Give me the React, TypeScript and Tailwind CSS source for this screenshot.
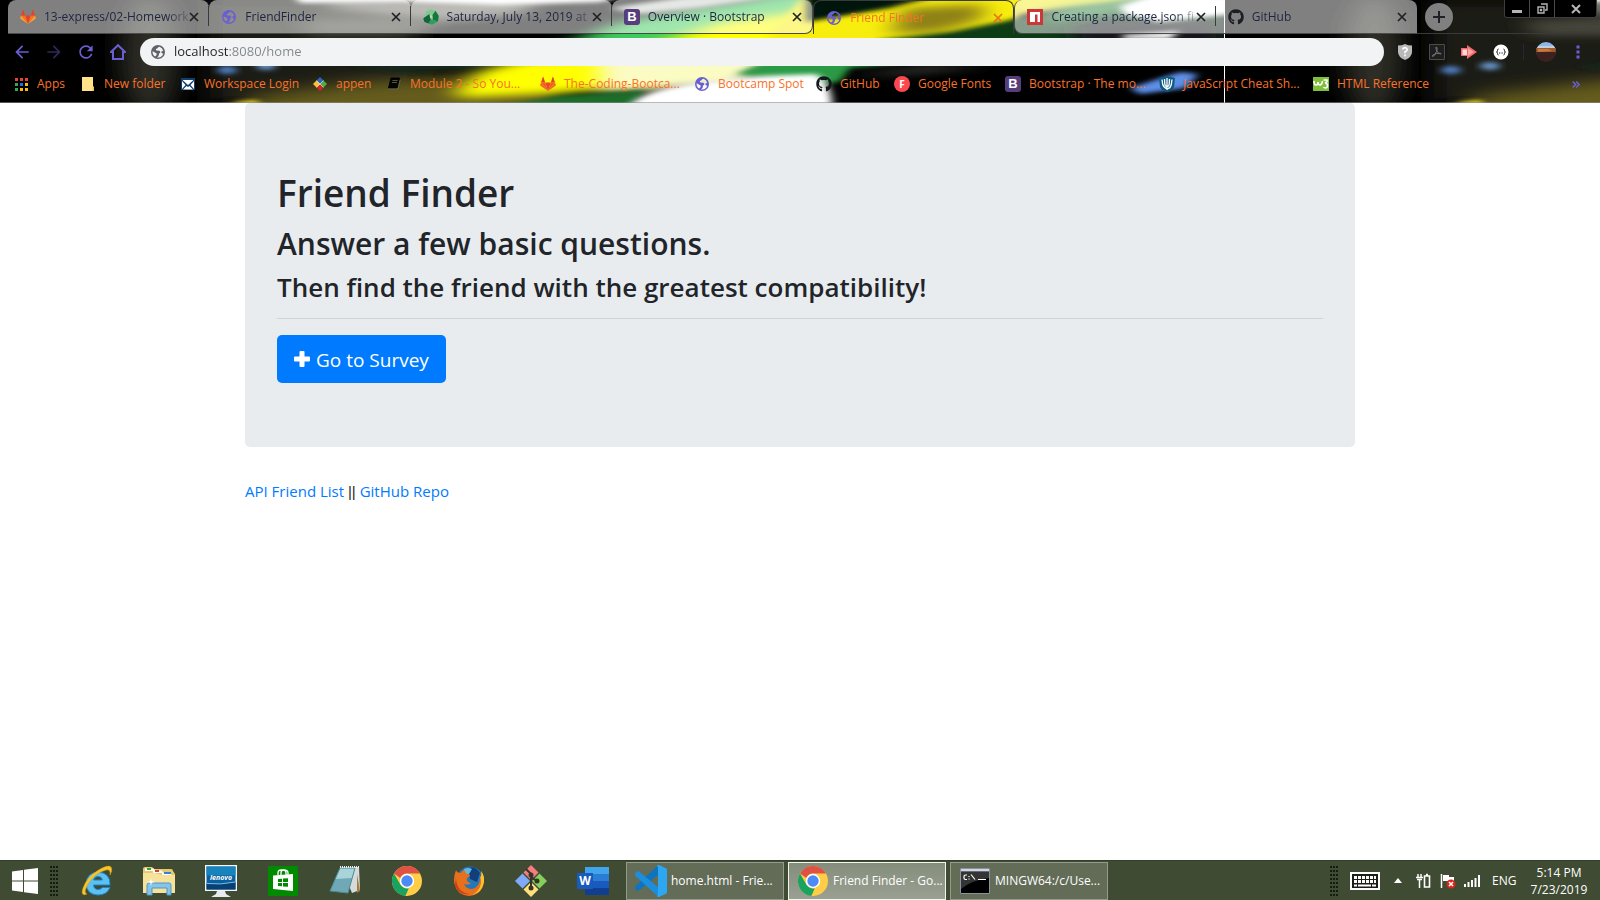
import type { ReactNode } from "react";
import { FaGithub } from "react-icons/fa";
import { MdArrowBack, MdArrowForward, MdRefresh } from "react-icons/md";

/* ---------- Theme artwork ---------- */

function ThemeArtwork() {
  return (
    <svg className="absolute inset-0 h-full w-full" preserveAspectRatio="xMinYMin slice" aria-hidden="true">
      <defs>
        <filter id="soft" x="-30%" y="-100%" width="160%" height="300%">
          <feGaussianBlur stdDeviation="14 8" />
        </filter>
        <filter id="mid" x="-30%" y="-100%" width="160%" height="300%">
          <feGaussianBlur stdDeviation="12 4" />
        </filter>
        <filter id="crisp" x="-30%" y="-100%" width="160%" height="300%">
          <feGaussianBlur stdDeviation="4 2" />
        </filter>
        <clipPath id="tileClip">
          <rect width="1224" height="103" />
        </clipPath>
        <clipPath id="upperClip">
          <rect width="1224" height="52" />
        </clipPath>
        <clipPath id="lowerClip">
          <rect y="52" width="1224" height="51" />
        </clipPath>
        <g id="tile" clipPath="url(#tileClip)">
          <rect width="1224" height="103" fill="#000" />
          <ellipse cx="150" cy="55" rx="28" ry="60" fill="#2e2f27" filter="url(#soft)" />
          <path d="M210 0H420V103H210Z" fill="#1a1a13" filter="url(#soft)" />
          <g clipPath="url(#upperClip)">
            <path d="M330 8L430 22L520 14L540 0H330Z" fill="#77766c" filter="url(#mid)" />
            <path d="M290 -8H640L600 2L500 5L400 2L300 3Z" fill="#fff" filter="url(#crisp)" />
            <path d="M300 20L400 16L440 24L400 36L310 36Z" fill="#45443a" filter="url(#mid)" />
            <path d="M560 46L620 22L700 8L800 -8H900V50Z" fill="#3ecb5c" filter="url(#mid)" />
            <path d="M610 8L690 -4H780L700 8L640 14Z" fill="#c9cfc9" filter="url(#crisp)" />
            <path d="M650 46L720 22L830 8L900 0V60H660Z" fill="#ff0" filter="url(#mid)" />
            <path d="M800 0L850 -6H1030L1012 30L860 48H760Z" fill="#f8ee08" filter="url(#crisp)" />
            <path d="M806 -6H945L890 8L830 18L806 22Z" fill="#03120a" filter="url(#crisp)" />
            <path d="M905 8L985 4L980 20L940 32L890 34Z" fill="#8f8212" filter="url(#mid)" />
            <path d="M880 40L950 32L1020 18L1100 12L1224 4V56H860Z" fill="#0a3a16" filter="url(#crisp)" />
            <path d="M1015 -8H1190L1110 4L1015 14Z" fill="#f5ed2c" filter="url(#crisp)" />
            <path d="M1050 10L1150 -4L1190 0L1120 12L1050 22Z" fill="#3aa050" filter="url(#mid)" />
            <path d="M1070 26L1110 20H1224V52H1080Z" fill="#17151a" filter="url(#mid)" />
            <path d="M1120 6L1150 -4H1232V14L1160 22L1124 14Z" fill="#fff" filter="url(#crisp)" />
            <path d="M1122 35L1180 31L1170 39H1124Z" fill="#fff" filter="url(#crisp)" />
          </g>
          <g clipPath="url(#lowerClip)">
            <path d="M250 96L360 82L560 66V125H240Z" fill="#655b1a" filter="url(#soft)" />
            <path d="M350 66L480 58L540 58L490 69L400 73Z" fill="#14281c" filter="url(#crisp)" />
            <path d="M455 92L480 72L520 60L660 52V84L580 92L460 98Z" fill="#ff0" filter="url(#mid)" />
            <path d="M600 52H790L740 86L600 92Z" fill="#fbfbc4" filter="url(#mid)" />
            <path d="M490 108L560 96L645 90L630 114H490Z" fill="#1f6d2c" filter="url(#crisp)" />
            <path d="M736 74L770 60L900 52L900 80L800 84Z" fill="#2b9a45" filter="url(#crisp)" />
            <path d="M838 84L850 68L960 58H1236V116H838Z" fill="#040404" filter="url(#crisp)" />
            <path d="M626 110Q634 92 690 84L760 76L816 74Q834 84 832 112Z" fill="#fff" filter="url(#crisp)" />
            <path d="M850 76L930 66L990 66L900 74Z" fill="#4a4944" filter="url(#mid)" />
            <path d="M1130 88L1180 72L1198 74L1186 88L1140 94Z" fill="#5d8fe8" filter="url(#crisp)" />
            <ellipse cx="227" cy="70" rx="10" ry="4" fill="#4d7dbd" filter="url(#crisp)" />
            <ellipse cx="266" cy="66" rx="10" ry="4" fill="#6593c4" filter="url(#crisp)" />
            <path d="M228 106L238 102L256 100L262 106Z" fill="#ffe62e" filter="url(#crisp)" />
          </g>
        </g>
      </defs>
      <use href="#tile" />
      <use href="#tile" x="1224" />
      <rect x="1224" width="1" height="103" fill="#fff" />
    </svg>
  );
}

/* ---------- Favicons ---------- */

const GitlabIcon = ({ flat = false }: { flat?: boolean }) => (
  <svg viewBox="0 0 16 16" className="size-4">
    <path fill={flat ? "#e8492c" : "#e24329"} d="M8 15 5.200 6.400h5.600z" />
    <path fill={flat ? "#f25a2a" : "#fc6d26"} d="M8 15 5.200 6.400H1zM8 15l2.800-8.600H15z" />
    <path fill={flat ? "#f4642a" : "#fca326"} d="M1 6.400.2 9q-.1.500.3.800L8 15zM15 6.400l.8 2.600q.1.500-.3.800L8 15z" />
    <path fill="#e24329" d="M1 6.400h4.200L3.400 1q-.3-.5-.6 0zM15 6.400h-4.200L12.600 1q.3-.5.6 0z" />
  </svg>
);

const GlobeMark = ({ className }: { className: string }) => (
  <svg viewBox="0 0 14 14" className={className}>
    <path
      fill="currentColor"
      fillRule="evenodd"
      d="M7 0a7 7 0 1 1 0 14A7 7 0 0 1 7 0zM8.500 1.800Q7 2 6.500 3.200L5 4q-.6 1 .6 1.500l2.900.3q1 .5.800 1.700L8 8.800 7.600 11 6 12.400a5.500 5.500 0 0 0 6.200-3.600L10.500 8V6.500l1.700-.8A5.500 5.500 0 0 0 8.500 1.800zM1.600 6.200A5.500 5.500 0 0 0 4 11.400L5.600 10V8.500L4 7.500z"
    />
  </svg>
);

const GlobeIcon = () => <GlobeMark className="size-3.5 text-[#6a5fd0]" />;

const BootstrapIcon = () => (
  <span className="flex size-4 items-center justify-center rounded-[3px] bg-[#563d7c] font-['Liberation_Sans',sans-serif] text-[13px] leading-4 font-bold text-white">
    B
  </span>
);

const CircleLeafIcon = () => (
  <svg viewBox="0 0 16 16" className="size-4">
    <path fill="#7fc98f" d="M3 2 8 .2l4.500 1.500L10 6 6.500 5 2 8z" />
    <path fill="#0f7a3c" d="M12.500 1.700 15.800 7l-.8 5.500L10 11l-.5-5z" />
    <path fill="#2f9f55" d="M15 12.500 9 15.800 5.500 14.500l2-4 3.500.5z" />
    <path fill="#0d6a38" d="M2 8 .2 9.500 1.500 13l4 1.500L8 10 6.500 5z" />
    <path fill="#b4dfbd" d="M6.500 5.500 9.500 7.500 7.500 10z" />
  </svg>
);

const NpmIcon = () => (
  <svg viewBox="0 0 16 16" className="size-4">
    <path fill="#cb3837" d="M0 0h16v16H0z" />
    <path fill="#fff" d="M3 3h10v10h-2.500V5.500H8V13H3z" />
  </svg>
);

const AppsIcon = () => (
  <svg viewBox="0 0 13 13" className="size-[13px]">
    <path fill="#ea4335" d="M0 0h3v3H0zM5 0h3v3H5zM10 0h3v3h-3z" />
    <path fill="#34a853" d="M0 5h3v3H0zM0 10h3v3H0z" />
    <path fill="#1a73e8" d="M5 5h3v3H5z" />
    <path fill="#fbbc05" d="M10 5h3v3h-3zM5 10h3v3H5zM10 10h3v3h-3z" />
  </svg>
);

const FolderIcon = () => (
  <svg viewBox="0 0 14 14" className="size-3.5">
    <path fill="#ffe38a" d="M1 0h11v9l1 1v4H1z" />
    <path fill="#f0c45a" d="M11.500 10H13v4h-1.500z" />
  </svg>
);

const MailIcon = () => (
  <svg viewBox="0 0 14 14" className="size-3.5">
    <path fill="#0f3f6a" d="M0 1h14v12H0z" />
    <path fill="#fff" d="m1.500 3 5.500 5 5.500-5zM1 4l3.500 4L1 12zM13 4 9.500 8l3.500 4zM2 12.500 5.500 9 7 10l1.500-1 3.500 3.500z" />
  </svg>
);

const AppenIcon = () => (
  <svg viewBox="0 0 14 14" className="size-3.5">
    <path fill="#2e63c4" d="m7 0 3.500 3.500L7 7 3.500 3.500z" />
    <path fill="#4caf3c" d="M10.500 3.500 14 7l-3.500 3.500L7 7z" />
    <path fill="#d2232a" d="M7 7l3.500 3.500L7 14l-3.500-3.500z" />
    <path fill="#f5c52c" d="M3.500 3.500 7 7l-3.500 3.500L0 7z" />
    <path stroke="#fff" strokeWidth=".6" d="m3.500 3.500 7 7m0-7-7 7" />
  </svg>
);

const BookIcon = () => (
  <svg viewBox="0 0 14 14" className="size-3.5">
    <path fill="#050505" stroke="#000" strokeLinejoin="round" d="M4 1h8.500L10 11H1.500z" />
    <path fill="none" stroke="#6b6a50" strokeWidth=".8" d="M5.500 3.500h5M5 5.500h5M1.500 12H11l2.200-9" />
  </svg>
);

const LetterFIcon = () => (
  <span className="flex size-4 items-center justify-center rounded-full bg-[#f9494f] text-[10px] leading-4 font-bold text-white">
    F
  </span>
);

const PitchforkIcon = () => (
  <svg viewBox="0 0 16 16" className="size-4">
    <path fill="#0d5a82" d="M0 2 8 0l8 2-1 9q-2 4-7 5-5-1-7-5z" />
    <path fill="none" stroke="#fff" strokeWidth="1.300" d="M8 2v12M3 3.500l.7 5Q5 12 8 12.500t4.300-4l.7-5M5.500 3l.3 5Q6 10.500 8 10.500M10.500 3l-.3 5Q10 10.500 8 10.500" />
  </svg>
);

const W3Icon = () => (
  <svg viewBox="0 0 16 14" className="h-3.5 w-4">
    <path fill="#7fbf3b" d="M0 0h16v14H0z" />
    <path
      fill="none"
      stroke="#fff"
      strokeWidth="1.600"
      d="M1 4q0 4 2 4t2-3q0 3 2 3t2.500-4M10.500 3H14q.5 2.500-2 3 2.500.2 2.500 2.500T12.500 11Q11 11 10.500 10"
    />
  </svg>
);

const CloseGlyph = () => (
  <svg viewBox="0 0 10 10" className="size-2.5">
    <path d="m1 1 8 8M9 1 1 9" stroke="currentColor" strokeWidth="1.700" />
  </svg>
);

/* ---------- Tab strip ---------- */

type Tab = { title: string; icon: ReactNode; shape: string; divider?: boolean; active?: boolean };

const lightTab = "bg-white/50 border-b border-[#4a4a4a] text-[#1d2540]";

const tabs: Tab[] = [
  { title: "13-express/02-Homework", icon: <GitlabIcon />, shape: lightTab, divider: true },
  { title: "FriendFinder", icon: <GlobeIcon />, shape: lightTab, divider: true },
  { title: "Saturday, July 13, 2019 at", icon: <CircleLeafIcon />, shape: lightTab, divider: true },
  { title: "Overview · Bootstrap", icon: <BootstrapIcon />, shape: `${lightTab} rounded-br-lg border-r` },
  { title: "Friend Finder", icon: <GlobeIcon />, shape: "border border-b-0 border-[#3a3a3a] text-[#f9722a]", active: true },
  { title: "Creating a package.json fi", icon: <NpmIcon />, shape: `${lightTab} rounded-bl-lg border-l`, divider: true },
  { title: "GitHub", icon: <FaGithub className="size-4 text-[#1b1f23]" />, shape: lightTab },
];

function TabStrip() {
  return (
    <div className="flex h-[34px] items-start pl-2">
      <div role="tablist" aria-label="Open tabs" className="grid max-w-[1409px] min-w-0 shrink basis-full grid-cols-7">
        {tabs.map((tab) => (
          <div
            key={tab.title}
            role="tab"
            aria-selected={!!tab.active}
            className={`relative flex h-[34px] min-w-0 items-center rounded-t-lg pr-[9px] pl-3 text-[12px] ${tab.shape}`}
          >
            <span className="mr-2 flex size-4 shrink-0 items-center justify-center">{tab.icon}</span>
            <span className="min-w-0 flex-1 whitespace-nowrap [mask-image:linear-gradient(to_right,#000_85%,#0004)]">
              {tab.title}
            </span>
            <button
              aria-label={`Close ${tab.title}`}
              className={`flex size-3 shrink-0 items-center justify-center ${tab.active ? "text-[#e8701e]" : "text-[#202124]"}`}
            >
              <CloseGlyph />
            </button>
            {tab.divider && <span className="absolute top-1.5 right-0 h-5 w-px bg-[#3a3a3a]" />}
          </div>
        ))}
      </div>
      <div className="flex h-[34px] shrink-0 grow basis-[150px] border-b border-[#3a3a3a]">
        <button aria-label="New tab" className="mt-[3px] ml-2 flex size-7 shrink-0 items-center justify-center rounded-full bg-[#808080]">
          <svg viewBox="0 0 12 12" className="size-3">
            <path d="M6 0v12M0 6h12" stroke="#202124" strokeWidth="2" />
          </svg>
        </button>
        <div className="mr-[3px] ml-auto flex h-[18px] w-[93px] rounded-b-[3px] border border-t-0 border-[#3d3d3d] bg-black">
          <button aria-label="Minimize" className="flex w-[25px] items-center justify-center border-r border-[#4a4a4a]">
            <svg viewBox="0 0 10 10" className="size-2.5">
              <path d="M0 6h10v3H0z" fill="#b5b5b5" />
            </svg>
          </button>
          <button aria-label="Restore" className="flex w-[25px] items-center justify-center border-r border-[#4a4a4a]">
            <svg viewBox="0 0 11 11" className="size-[11px]">
              <path d="M4 1h6v6H8M1 4h6v6H1zM3.500 6.500h1v1h-1z" fill="none" stroke="#b5b5b5" strokeWidth="1.400" />
            </svg>
          </button>
          <button aria-label="Close window" className="flex flex-1 items-center justify-center">
            <svg viewBox="0 0 10 10" className="size-2.5">
              <path d="m1 1 8 8M9 1 1 9" stroke="#b5b5b5" strokeWidth="2" />
            </svg>
          </button>
        </div>
      </div>
    </div>
  );
}

/* ---------- Toolbar ---------- */

function Toolbar() {
  return (
    <div className="flex h-9 items-center pl-3">
      <div className="flex gap-3 text-[#6a5fd0]">
        <button aria-label="Back" className="flex size-5 items-center justify-center">
          <MdArrowBack className="size-5" />
        </button>
        <button aria-label="Forward" className="flex size-5 items-center justify-center text-[#2f2a5a]">
          <MdArrowForward className="size-5" />
        </button>
        <button aria-label="Reload" className="flex size-5 items-center justify-center">
          <MdRefresh className="size-5" />
        </button>
        <button aria-label="Home" className="flex size-5 items-center justify-center">
          <svg viewBox="0 0 16 16" className="size-4">
            <path d="M1 8 8 1.200 15 8h-2v7H3V8z" fill="none" stroke="currentColor" strokeWidth="2" />
          </svg>
        </button>
      </div>
      <div className="ml-3 flex h-7 min-w-0 flex-1 items-center rounded-full bg-[#f1f3f4] pl-[11px]">
        <GlobeMark className="size-3.5 shrink-0 text-[#5f6368]" />
        <input
          aria-label="Address"
          defaultValue="localhost:8080/home"
          className="ml-[9px] min-w-0 flex-1 bg-[linear-gradient(to_right,#202124_55px,#80868b_55px)] bg-clip-text text-[13px] text-transparent outline-none"
        />
      </div>
      <div className="flex shrink-0 items-center">
        <button aria-label="Site protection" className="ml-[13px] flex w-4 justify-center">
          <svg viewBox="0 0 14 16" className="h-4 w-3.5">
            <path d="M0 1.500Q4 1.500 7 0q3 1.500 7 1.500V8q0 5-7 8-7-3-7-8z" fill="#b9b9b9" />
            <path d="M4.800 5.500Q5 3.600 7 3.600t2.200 1.800Q9.200 6.800 7 7.800v1.400M7 10.500v1.800" fill="none" stroke="#fff" strokeWidth="1.600" />
          </svg>
        </button>
        <button aria-label="PDF tools" className="ml-4">
          <svg viewBox="0 0 16 16" className="size-4">
            <path d="M.5.500h15v15H.5z" fill="#1e1e1e" stroke="#4b4b4b" />
            <path d="M7 3q2 0 .5 4.500Q6 11.500 4 12.500q-1.500 0 0-1.500 3-2 7.500-1.800 1.500 1-.5.800Q8 8.800 7 5z" fill="none" stroke="#777" />
          </svg>
        </button>
        <button aria-label="Shortcut" className="ml-4">
          <svg viewBox="0 0 16 14" className="h-3.5 w-4">
            <path d="M0 3h6V0l10 7-10 7v-3H0z" fill="#f4686a" />
            <path d="M1.500 4.500H6V10H1.500z" fill="#fbdcdc" />
            <path d="m7 3 6 4-6 4z" fill="#f9a3a3" />
          </svg>
        </button>
        <button aria-label="JSON viewer" className="ml-4">
          <svg viewBox="0 0 16 16" className="size-4">
            <circle cx="8" cy="8" r="7.500" fill="#fff" />
            <path d="M5.500 5Q4.500 5 4.500 6.500T3.500 8q1 0 1 1.500t1 1.500M10.500 5q1 0 1 1.500t1 1.500q-1 0-1 1.500t-1 1.500M6 9h1m.7 0h.8m.7 0h.8" fill="none" stroke="#222" />
          </svg>
        </button>
        <span className="ml-[14px] h-4 w-px bg-[#28253f]" />
        <button aria-label="Profile" className="ml-3">
          <svg viewBox="0 0 20 20" className="size-5">
            <clipPath id="avatar">
              <circle cx="10" cy="10" r="10" />
            </clipPath>
            <g clipPath="url(#avatar)">
              <path d="M0 0h20v8H0z" fill="#8db8ea" />
              <path d="M0 4h20v3H0z" fill="#c5cfdb" />
              <path d="M0 6h20v6H0z" fill="#a05a2b" />
              <path d="M0 10h20v10H0z" fill="#3c211e" />
              <path d="M2 7h10l4 2-14 1z" fill="#c57a3f" />
            </g>
          </svg>
        </button>
        <button aria-label="Menu" className="mr-[14px] ml-3.5 flex w-4 justify-center">
          <svg viewBox="0 0 4 14" className="h-3.5 w-1">
            <path d="M.5.500h3v3h-3zM.5 5.500h3v3h-3zM.5 10.500h3v3h-3z" fill="#6a5fd0" />
          </svg>
        </button>
      </div>
    </div>
  );
}

/* ---------- Bookmarks ---------- */

const bookmarks: { label: string; icon: ReactNode; width: string }[] = [
  { label: "Apps", icon: <AppsIcon />, width: "w-[67px]" },
  { label: "New folder", icon: <FolderIcon />, width: "w-[100px]" },
  { label: "Workspace Login", icon: <MailIcon />, width: "w-[132px]" },
  { label: "appen", icon: <AppenIcon />, width: "w-[74px]" },
  { label: "Module 2 - So You...", icon: <BookIcon />, width: "w-[154px]" },
  { label: "The-Coding-Bootca...", icon: <GitlabIcon flat />, width: "w-[154px]" },
  { label: "Bootcamp Spot", icon: <GlobeIcon />, width: "w-[122px]" },
  { label: "GitHub", icon: <FaGithub className="size-4 text-[#16191c]" />, width: "w-[78px]" },
  { label: "Google Fonts", icon: <LetterFIcon />, width: "w-[111px]" },
  { label: "Bootstrap · The mo...", icon: <BootstrapIcon />, width: "w-[154px]" },
  { label: "JavaScript Cheat Sh...", icon: <PitchforkIcon />, width: "w-[154px]" },
  { label: "HTML Reference", icon: <W3Icon />, width: "w-[130px]" },
];

function BookmarksBar() {
  return (
    <nav aria-label="Bookmarks" className="flex h-[33px] items-center border-b border-[#8a8a8a]/60 pr-5 pb-1 pl-[13px]">
      {bookmarks.map((item) => (
        <a key={item.label} href="#" className={`flex h-6 shrink-0 items-center gap-2 text-[12px] whitespace-nowrap text-[#f9722a] ${item.width}`}>
          <span className="flex size-4 shrink-0 items-center justify-center">{item.icon}</span>
          {item.label}
        </a>
      ))}
      <button aria-label="More bookmarks" className="ml-auto">
        <svg viewBox="0 0 8 7" className="h-[7px] w-2">
          <path d="m.7.500 3 3-3 3M4.200.500l3 3-3 3" fill="none" stroke="#6a5fd0" strokeWidth="1.500" />
        </svg>
      </button>
    </nav>
  );
}

/* ---------- Page ---------- */

function Page() {
  return (
    <main className="mx-auto w-full max-w-[1110px] text-[#212529]">
      <section className="mb-8 rounded-[5px] bg-[#e9ecef] px-8 py-16">
        <h1 className="mb-1.5 text-[37px] leading-[52px] font-semibold">Friend Finder</h1>
        <h2 className="mb-2 text-[30px] leading-[37px] font-semibold">Answer a few basic questions.</h2>
        <h3 className="text-[26px] leading-[34px] font-semibold">Then find the friend with the greatest compatibility!</h3>
        <hr className="mt-3.5 mb-4 border-t border-[#d0d4d8]" />
        <a href="#survey" className="inline-flex h-12 items-center gap-1.5 rounded-[5px] bg-[#007bff] px-[17px] pt-0.5 text-[19px] text-white">
          <svg viewBox="0 0 16 16" className="-mt-0.5 size-4">
            <path d="M6.500 0h3q1 0 1 1v4.500H15q1 0 1 1v3q0 1-1 1h-4.500V15q0 1-1 1h-3q-1 0-1-1v-4.500H1q-1 0-1-1v-3q0-1 1-1h4.500V1q0-1 1-1z" fill="#fff" />
          </svg>
          Go to Survey
        </a>
      </section>
      <p className="text-[15px] leading-6">
        <a href="#api" className="text-[#007bff]">API Friend List</a>{" "}
        <span className="font-['Liberation_Sans',sans-serif]">||</span>{" "}
        <a href="#repo" className="text-[#007bff]">GitHub Repo</a>
      </p>
    </main>
  );
}

/* ---------- Taskbar ---------- */

const ChromeIcon = () => (
  <svg viewBox="0 0 30 30" className="size-[30px]">
    <circle cx="15" cy="15" r="15" fill="#ffcd46" />
    <path d="M2 7.500A15 15 0 0 1 28 7.500H15a7.500 7.500 0 0 0-6.800 4.600z" fill="#de5246" />
    <path d="M2 7.500 8.500 18.800Q11 22.500 15 22.500h2L13.500 30A15 15 0 0 1 2 7.500z" fill="#1aa260" />
    <path d="M21.500 18.700 15 30h-1.500L17 22z" fill="#ffcd46" />
    <circle cx="15" cy="15" r="7.200" fill="#fff" />
    <circle cx="15" cy="15" r="5.700" fill="#4c8bf5" />
  </svg>
);

const InternetExplorerIcon = () => (
  <svg viewBox="0 0 32 32" className="size-8">
    <path
      d="M29 20H12.500q.5 4.500 4.700 4.500 3 0 4-2H29Q26 30 17 30 5.500 29.500 5 18.500 6 7.500 17.300 7 29.500 8 29 20zM12.600 15h8.800q-.5-3.500-4.400-3.500T12.600 15z"
      fill="#5cc0f2"
      stroke="#1c86cf"
    />
    <path d="M6 29Q-1 32 2 23 6 12 16 6 27-1 30 2q2 3-1 8 1-6-4-5Q14 8 7 19q-5 9-1 10z" fill="#f6c52e" stroke="#d99e10" strokeWidth=".5" />
  </svg>
);

const ExplorerIcon = () => (
  <svg viewBox="0 0 32 30" className="h-[30px] w-8">
    <path d="M0 3q0-2 2-2h7l2 2h17q2 0 2 2l2 3v18H0z" fill="#e8c76f" />
    <path d="M2 2.500h9l1 2.500H2zM10 4.500h9l1 2.500H10zM19 6.500h9V9h-9z" fill="#fff" />
    <path d="M4 2h4v2H4z" fill="#2ba83c" />
    <path d="M12 4h4v2h-4z" fill="#d8402d" />
    <path d="M21 6h7v2h-7z" fill="#2f86cf" />
    <path d="M0 7h11l8 2h13v18H0z" fill="#f7e29c" />
    <path d="M4 29V19q0-2 2-2h20q2 0 2 2v10h-4v-7H9v7z" fill="#86c5ea" stroke="#4f96c6" />
    <path d="m8 12 .7 3.300L12 16l-3.300.7L8 20l-.7-3.300L4 16l3.300-.7z" fill="#fff" />
  </svg>
);

const LenovoIcon = () => (
  <svg viewBox="0 0 32 32" className="size-8">
    <path d="M0 0h32v26H0z" fill="#f4f6f8" />
    <path d="M1.500 1.500h29v23h-29z" fill="#0b5f9e" />
    <path d="M1.500 1.500h29v9h-29z" fill="#1683bd" />
    <path d="M1.500 18q14 2 29-1v7.500h-29z" fill="#093f72" />
    <path d="M1.500 18.500q14 1.500 29-1.500" fill="none" stroke="#6fc3ec" />
    <path d="M12 26h8l1 3 5 3H6l5-3z" fill="#e7ebee" />
    <text x="16" y="15" textAnchor="middle" fontSize="7" fontWeight="700" fontStyle="italic" fill="#fff">lenovo</text>
  </svg>
);

const StoreIcon = () => (
  <svg viewBox="0 0 30 30" className="size-[30px]">
    <path d="M0 0h30v30H0z" fill="#008a00" />
    <path d="M5 9.500 25 8v17L5 23z" fill="#fff" />
    <path d="M10 9V7q0-3 3-3h2q3 0 3 3v2M13 9V7q0-3 3-3 4 0 4 3v2" fill="none" stroke="#fff" strokeWidth="1.300" />
    <path d="m10 13 4-.3v3.300h-4zM15 12.600l5-.4V16h-5zM10 17h4v3.300l-4-.3zM15 17h5v3.800l-5-.4z" fill="#008a00" />
  </svg>
);

const NotepadIcon = () => (
  <svg viewBox="0 0 32 32" className="size-8">
    <path d="M12 2h18l1 23-8 3z" fill="#d7dadb" />
    <path d="M28 28V9l3 17z" fill="#a77c3c" />
    <path d="M11 3h15L19 28 1 26z" fill="#6fa9b5" />
    <path d="M11 3h15l-3 10L6 14z" fill="#a9d4da" />
    <path d="M11 3h15L19 28 1 26z" fill="none" stroke="#4d8b99" />
    <path d="M11 2h19" stroke="#eee" strokeWidth="2" strokeDasharray="1 1" />
  </svg>
);

const FirefoxIcon = () => (
  <svg viewBox="0 0 30 30" className="size-[30px]">
    <circle cx="16" cy="13.500" r="13" fill="#2378b8" />
    <path d="M14 2q7-3 12 5l-3 9-7-3z" fill="#123f7c" />
    <path d="M10 3q5-2 8 0l-3 5-5 1z" fill="#5fb7df" />
    <path d="M2 4q-3 8-1.500 14Q3 29 15 30q13-1 15-14 .5-7-3-11 1 5-1 7 0 9-8 11-6 0-8-5 4 2 7-1-5-1-4-5l3-2q0-2-3-2Q10 6 11 4 8 4 7 7q-4 0-5-3z" fill="#e8701c" />
    <path d="M27 5q4 5 3 11-2 11-12 13 8-4 9-12 0-6-1-5 2-2 1-7z" fill="#fbc02d" />
    <path d="M2 12Q3 27 16 28 5 30 1 19z" fill="#cf3c17" />
  </svg>
);

const GitIcon = () => (
  <svg viewBox="0 0 32 32" className="size-8">
    <path d="m16 0 7.500 7.500L16 15 8.500 7.500z" fill="#f77d7d" />
    <path d="M24.500 8.500 32 16l-7.500 7.500L17 16z" fill="#85cf5c" />
    <path d="m16 17 7.500 7.500L16 32l-7.500-7.500z" fill="#ffe07a" />
    <path d="m7.500 8.500 7.500 7.500-7.500 7.500L0 16z" fill="#7faaf7" />
    <path d="M16 8v16M11 4l5 5M16 12l6 4" fill="none" stroke="#36342a" strokeWidth="2" />
    <g fill="#36342a">
      <circle cx="16" cy="10" r="2.500" />
      <circle cx="16" cy="23" r="2.500" />
      <circle cx="22" cy="16" r="2.500" />
    </g>
  </svg>
);

const WordIcon = () => (
  <svg viewBox="0 0 32 28" className="h-7 w-8">
    <path d="M8 0h24v7H8z" fill="#41a5ee" />
    <path d="M8 7h24v7H8z" fill="#2b7cd3" />
    <path d="M8 14h24v7H8z" fill="#185abd" />
    <path d="M8 21h24v7H8z" fill="#103f91" />
    <path d="M0 6h16v16H0z" fill="#185abd" />
    <text x="8" y="18" textAnchor="middle" fontSize="12" fontWeight="700" fill="#fff">W</text>
  </svg>
);

const CodeIcon = () => (
  <svg viewBox="0 0 32 32" className="size-8">
    <path d="M24 0v9L4 25.500q-1 .5-2 0l-2-2q-.7-1 0-2L23 .500z" fill="#0d74c0" />
    <path d="M24 32v-9L4 6.500q-1-.5-2 0l-2 2q-.7 1 0 2L23 31.500z" fill="#1b8fdd" />
    <path d="m24 0 7 3.200q1 .6 1 1.800v22q0 1.200-1 1.800L24 32q-1.500.2-2-1l1-1V2l-1-1q.5-1.200 2-1z" fill="#2ea7f2" />
  </svg>
);

const ConsoleIcon = () => (
  <svg viewBox="0 0 30 26" className="h-[26px] w-[30px]">
    <path d="M.5.500h29v25H.5z" fill="#000" stroke="#8b93a0" />
    <path d="M1 1h28v2.500H1z" fill="#cfd6e2" />
    <path d="M1 4h28v6Q12 12 1 21z" fill="#343434" />
    <path d="M7 7H5.500Q4 7 4 8.500V10q0 1.500 1.500 1.500H7M9 8v1M9 10.500v1M11 6.500l4 5M18 11.500h8" fill="none" stroke="#fff" strokeWidth="1.200" />
  </svg>
);

const Grip = () => (
  <svg viewBox="0 0 8 30" className="h-[30px] w-2">
    <path d="M1 0v30M4 0v30M7 0v30" stroke="#161b10" strokeWidth="2" strokeDasharray="2 2" />
  </svg>
);

const launchers: { name: string; icon: ReactNode }[] = [
  { name: "Internet Explorer", icon: <InternetExplorerIcon /> },
  { name: "File Explorer", icon: <ExplorerIcon /> },
  { name: "Lenovo", icon: <LenovoIcon /> },
  { name: "Store", icon: <StoreIcon /> },
  { name: "Notepad", icon: <NotepadIcon /> },
  { name: "Chrome", icon: <ChromeIcon /> },
  { name: "Firefox", icon: <FirefoxIcon /> },
  { name: "Git", icon: <GitIcon /> },
  { name: "Word", icon: <WordIcon /> },
];

const windows = [
  { title: "home.html - Frie...", icon: <CodeIcon />, look: "border-[#939c8a] bg-[#626c57]" },
  { title: "Friend Finder - Go...", icon: <ChromeIcon />, look: "border-[#f2f4ee] bg-linear-to-b from-[#848d7c] to-[#9aa092]" },
  { title: "MINGW64:/c/Use...", icon: <ConsoleIcon />, look: "border-[#939c8a] bg-[#626c57]" },
];

function Taskbar() {
  return (
    <footer className="mt-auto flex h-10 items-center border-t border-[#343f2a] bg-[#3f4b32] text-[12px] text-white">
      <button aria-label="Start" className="ml-3 flex">
        <svg viewBox="0 0 26 26" className="size-[26px]">
          <path d="M0 3.500 11 2v10.500H0zM12 1.800 26 0v12.500H12zM0 13.500h11V24L0 22.500zM12 13.500h14V26l-14-1.800z" fill="#fff" />
        </svg>
      </button>
      <span className="ml-3 flex"><Grip /></span>
      <div className="ml-2 flex">
        {launchers.map((item) => (
          <button key={item.name} aria-label={item.name} className="flex h-9 w-[62px] items-center justify-center">
            {item.icon}
          </button>
        ))}
      </div>
      <div className="ml-0.5 flex gap-1">
        {windows.map((item) => (
          <button key={item.title} className={`flex h-[38px] w-[158px] items-center gap-1 border pl-2 whitespace-nowrap ${item.look}`}>
            <span className="flex w-8 shrink-0 items-center justify-center">{item.icon}</span>
            {item.title}
          </button>
        ))}
      </div>
      <div className="ml-auto flex items-center">
        <Grip />
        <button aria-label="Keyboard" className="ml-3 flex">
          <svg viewBox="0 0 30 18" className="h-[18px] w-[30px]">
            <path d="M1 1h28v16H1z" fill="#1b2014" stroke="#fff" strokeWidth="2" />
            <path d="M4 5.500h22M4 9.500h22" stroke="#fff" strokeWidth="3" strokeDasharray="3 1" />
            <path d="M4 13.500h3M8 13.500h13M22 13.500h4" stroke="#fff" strokeWidth="2" />
          </svg>
        </button>
        <button aria-label="Show hidden icons" className="ml-[14px] flex">
          <svg viewBox="0 0 8 5" className="h-[5px] w-2">
            <path d="m4 0 4 5H0z" fill="#fff" />
          </svg>
        </button>
        <svg viewBox="0 0 16 16" className="ml-[14px] size-4">
          <path d="M8.500 3h5v11h-5zM10 1.500h2" fill="none" stroke="#fff" strokeWidth="1.600" />
          <path d="M2 1v3M5 1v3M0 4.500h7M1 6.500h5M3.500 7v8" fill="none" stroke="#fff" strokeWidth="1.500" />
        </svg>
        <svg viewBox="0 0 16 16" className="ml-2 size-4">
          <path d="M1.500 1v14" stroke="#fff" strokeWidth="1.500" />
          <path d="M3 2h6v2h5v6H8V8H3z" fill="#fff" />
          <circle cx="11" cy="11" r="4.500" fill="#d9251c" />
          <path d="m9 9 4 4M13 9l-4 4" stroke="#fff" strokeWidth="1.500" />
        </svg>
        <svg viewBox="0 0 16 14" className="ml-2 h-3.5 w-4">
          <path d="M0 10h2v3H0zM3.500 8h2v5h-2zM7 6h2v7H7zM10.500 4h2v9h-2zM14 1h2v12h-2z" fill="#fff" />
        </svg>
        <span className="ml-3 w-[26px]">ENG</span>
        <div className="w-[82px] text-center leading-[17px]">
          <div>5:14 PM</div>
          <div>7/23/2019</div>
        </div>
      </div>
    </footer>
  );
}

export default function App() {
  return (
    <div className="flex min-h-screen flex-col bg-white font-['Open_Sans','Noto_Sans',sans-serif]">
      <header className="relative isolate overflow-hidden bg-black">
        <ThemeArtwork />
        <div className="relative">
          <TabStrip />
          <Toolbar />
          <BookmarksBar />
        </div>
      </header>
      <Page />
      <Taskbar />
    </div>
  );
}
